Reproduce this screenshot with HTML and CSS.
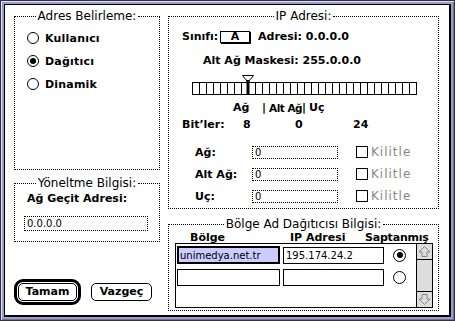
FILE: index.html
```html
<!DOCTYPE html>
<html>
<head>
<meta charset="utf-8">
<link rel="stylesheet" href="styles.css">
</head>
<body>
<div class="frame">
  <div class="dialog">
    <div class="col">
      <div class="group g-adres">
        <div class="gtitle"><span>Adres Belirleme:</span></div>
        <div class="radios">
          <div class="radio b"><span class="rb"></span>Kullanıcı</div>
          <div class="radio b"><span class="rb on"></span>Dağıtıcı</div>
          <div class="radio b"><span class="rb"></span>Dinamik</div>
        </div>
      </div>
      <div class="group g-yon">
        <div class="gtitle"><span>Yöneltme Bilgisi:</span></div>
        <div class="lbl b">Ağ Geçit Adresi:</div>
        <div class="field dotted gw">0.0.0.0</div>
      </div>
      <div class="buttons">
        <div class="ring"><div class="btn b w-ok">Tamam</div></div>
        <div class="btn b w-cancel">Vazgeç</div>
      </div>
    </div>
    <div class="col">
      <div class="group g-ip">
        <div class="gtitle"><span>IP Adresi:</span></div>
        <div class="row r-class b">
          <span class="w-sinif">Sınıfı:</span>
          <span class="popup">A</span>
          <span class="addr">Adresi: 0.0.0.0</span>
        </div>
        <div class="row r-mask b">Alt Ağ Maskesi: 255.0.0.0</div>
        <div class="slider">
          <svg class="marker" width="12" height="20" viewBox="0 0 12 20">
            <polygon points="0.5,0.5 11.5,0.5 7,6 5,6" fill="#fff" stroke="#000" stroke-width="1"/>
            <rect x="4.5" y="5" width="3" height="15" fill="#000"/>
          </svg>
          <div class="cells"></div>
        </div>
        <div class="row r-parts b">
          <span class="p1">Ağ</span><span class="p2">|</span><span class="p3">Alt Ağ</span><span class="p2">|</span><span>Uç</span>
        </div>
        <div class="row r-bits b">
          <span class="q1">Bit’ler:</span><span class="q2">8</span><span class="q3">0</span><span>24</span>
        </div>
        <div class="fields">
          <div class="frow">
            <span class="flbl b">Ağ:</span>
            <span class="field dotted fw">0</span>
            <span class="cb"></span><span class="kil">Kilitle</span>
          </div>
          <div class="frow">
            <span class="flbl b">Alt Ağ:</span>
            <span class="field dotted fw">0</span>
            <span class="cb"></span><span class="kil">Kilitle</span>
          </div>
          <div class="frow">
            <span class="flbl b">Uç:</span>
            <span class="field dotted fw">0</span>
            <span class="cb"></span><span class="kil">Kilitle</span>
          </div>
        </div>
      </div>
      <div class="group g-bolge">
        <div class="gtitle"><span>Bölge Ad Dağıtıcısı Bilgisi:</span></div>
        <div class="row r-heads b">
          <span class="h1">Bölge</span><span class="h2">IP Adresi</span><span class="h3">Saptanmış</span>
        </div>
        <div class="table">
          <div class="trows">
            <div class="trow">
              <span class="cell name sel">unimedya.net.tr</span>
              <span class="cell ip">195.174.24.2</span>
              <span class="rb on tr"></span>
            </div>
            <div class="trow">
              <span class="cell name"></span>
              <span class="cell ip"></span>
              <span class="rb tr"></span>
            </div>
          </div>
          <div class="scroll">
            <div class="arrow up">
              <svg width="13" height="13" viewBox="0 0 13 13"><polygon points="6.5,1.5 12,7 9,7 9,11.5 4,11.5 4,7 1,7" fill="none" stroke="#888" stroke-width="1"/></svg>
            </div>
            <div class="track"></div>
            <div class="arrow down">
              <svg width="13" height="13" viewBox="0 0 13 13"><polygon points="6.5,11.5 12,6 9,6 9,1.5 4,1.5 4,6 1,6" fill="none" stroke="#888" stroke-width="1"/></svg>
            </div>
          </div>
        </div>
      </div>
    </div>
  </div>
</div>
</body>
</html>
```

FILE: styles.css
```css
* { box-sizing: border-box; }
html, body { margin: 0; padding: 0; background: #fff; }
body {
  font-family: "DejaVu Sans", sans-serif;
  font-size: 12px;
  color: #000;
}
.b { font-family: "DejaVu Sans", sans-serif; font-weight: bold; font-size: 11px; }

.frame {
  width: 455px;
  height: 321px;
  border: 1px solid #333;
  background: #9c9ccc;
  box-shadow: inset 1px 1px 0 #ddddff, inset -1px -1px 0 #6e6e99;
  padding: 3px;
}
.dialog {
  height: 100%;
  background: #fff;
  border-style: solid;
  border-color: #000;
  border-width: 1px 2px 2px 1px;
  display: grid;
  grid-template-columns: 146px 271px;
  column-gap: 8px;
  align-items: start;
  padding: 11px 0 0 9px;
}
.col { display: flex; flex-direction: column; }

.group {
  border: 1px dotted #000;
  border-top: 0;
}
.gtitle {
  display: flex;
  align-items: center;
  height: 12px;
  line-height: 12px;
  margin: -6px -1px 0;
  font-size: 12px;
  font-weight: normal;
}
.gtitle::before, .gtitle::after {
  content: "";
  flex: 1;
  border-top: 1px dotted #000;
  height: 0;
}
.gtitle span { padding: 0 2px; white-space: nowrap; }

/* left */
.g-adres { height: 154px; }
.radios {
  display: flex;
  flex-direction: column;
  gap: 7px;
  padding: 8px 0 0 12px;
}
.radio { display: flex; align-items: center; gap: 6px; height: 16px; letter-spacing: 0.2px; }
.rb {
  display: inline-block;
  width: 12px;
  height: 12px;
  border: 1px solid #000;
  border-radius: 50%;
  position: relative;
  flex: none;
  background: #fff;
}
.rb.on::after {
  content: "";
  position: absolute;
  left: 2px; top: 2px;
  width: 6px; height: 6px;
  border-radius: 50%;
  background: #000;
}

.g-yon { margin-top: 13px; height: 59px; }
.lbl { height: 16px; line-height: 16px; margin-top: 2px; padding-left: 12px; }
.field {
  display: inline-flex;
  align-items: center;
  font-size: 10px;
  font-family: "DejaVu Sans", sans-serif;
  padding-left: 2px;
  white-space: nowrap;
}
.dotted { border: 1px dotted #000; }
.gw { display: flex; margin: 9px 0 0 9px; width: 124px; height: 15px; }

.buttons { display: flex; align-items: center; gap: 10px; margin-top: 37px; }
.ring {
  border: 3px solid #000;
  border-radius: 9px;
  padding: 1px;
}
.btn {
  height: 18px;
  border: 1px solid #000;
  border-radius: 5px;
  display: flex;
  align-items: center;
  justify-content: center;
  line-height: 16px;
}
.w-ok { width: 59px; }
.w-cancel { width: 61px; }

/* right */
.g-ip { height: 193px; }
.row { display: flex; align-items: center; height: 14px; line-height: 14px; white-space: nowrap; }
.r-class { margin-top: 8px; padding-left: 13px; }
.w-sinif { width: 38px; }
.popup {
  width: 30px;
  height: 12px;
  border: 1px solid #000;
  box-shadow: 1px 1px 0 #000;
  display: flex;
  align-items: center;
  justify-content: center;
  line-height: 10px;
}
.addr { margin-left: 8px; }
.r-mask { margin-top: 10px; padding-left: 34px; }

.slider { position: relative; margin: 7px 0 0 23px; padding-top: 7px; }
.marker { position: absolute; left: 50px; top: 0; }
.cells {
  width: 225px;
  height: 13px;
  border-top: 1px solid #000;
  border-bottom: 1px solid #000;
  background: repeating-linear-gradient(to right, #000 0 1px, #fff 1px 7px);
}

.r-parts { margin-top: 6px; padding-left: 64px; }
.p1 { width: 29px; }
.p2 { width: 7px; }
.p3 { width: 33px; font-size: 10.5px; letter-spacing: -0.5px; }
.r-bits { margin-top: 3px; padding-left: 13px; }
.q1 { width: 61px; }
.q2 { width: 52px; }
.q3 { width: 58px; }

.fields { display: flex; flex-direction: column; gap: 8px; margin-top: 13px; }
.frow { display: flex; align-items: center; height: 14px; padding-left: 26px; }
.flbl { width: 57px; }
.fw { width: 86px; height: 13px; }
.cb {
  width: 12px; height: 12px;
  border: 1px solid #000;
  margin-left: 18px;
  flex: none;
}
.kil {
  margin-left: 3px;
  color: #888;
  font-size: 12px;
  letter-spacing: 1px;
}

.g-bolge { margin-top: 15px; height: 87px; }
.r-heads { height: 11px; line-height: 11px; margin-top: 2px; padding-left: 21px; }
.h1 { width: 100px; }
.h2 { width: 75px; }
.h3 { letter-spacing: -0.2px; }

.table {
  display: flex;
  width: 258px;
  height: 65px;
  margin: 0 0 0 6px;
  border: 1px solid #000;
}
.trows {
  flex: 1;
  display: flex;
  flex-direction: column;
  gap: 4px;
  padding: 2px 0 0 1px;
}
.trow { display: flex; align-items: center; height: 18px; }
.cell {
  height: 17px;
  border: 1px solid #000;
  display: flex;
  align-items: center;
  font-size: 10px;
  padding-left: 2px;
  white-space: nowrap;
}
.name { width: 103px; }
.ip { width: 101px; margin-left: 3px; }
.sel { height: 18px; border-width: 2px; background: #ccccff; padding-left: 1px; }
.tr { width: 13px; height: 13px; margin-left: 9px; }
.tr.on::after { left: 2.5px; top: 2.5px; }

.scroll {
  width: 16px;
  border-left: 1px solid #000;
  display: flex;
  flex-direction: column;
  background: #ddd;
}
.arrow { height: 16px; display: flex; align-items: center; justify-content: center; background: #ddd; }
.arrow.up { border-bottom: 1px solid #000; }
.arrow.down { border-top: 1px solid #000; }
.track { flex: 1; }
```
